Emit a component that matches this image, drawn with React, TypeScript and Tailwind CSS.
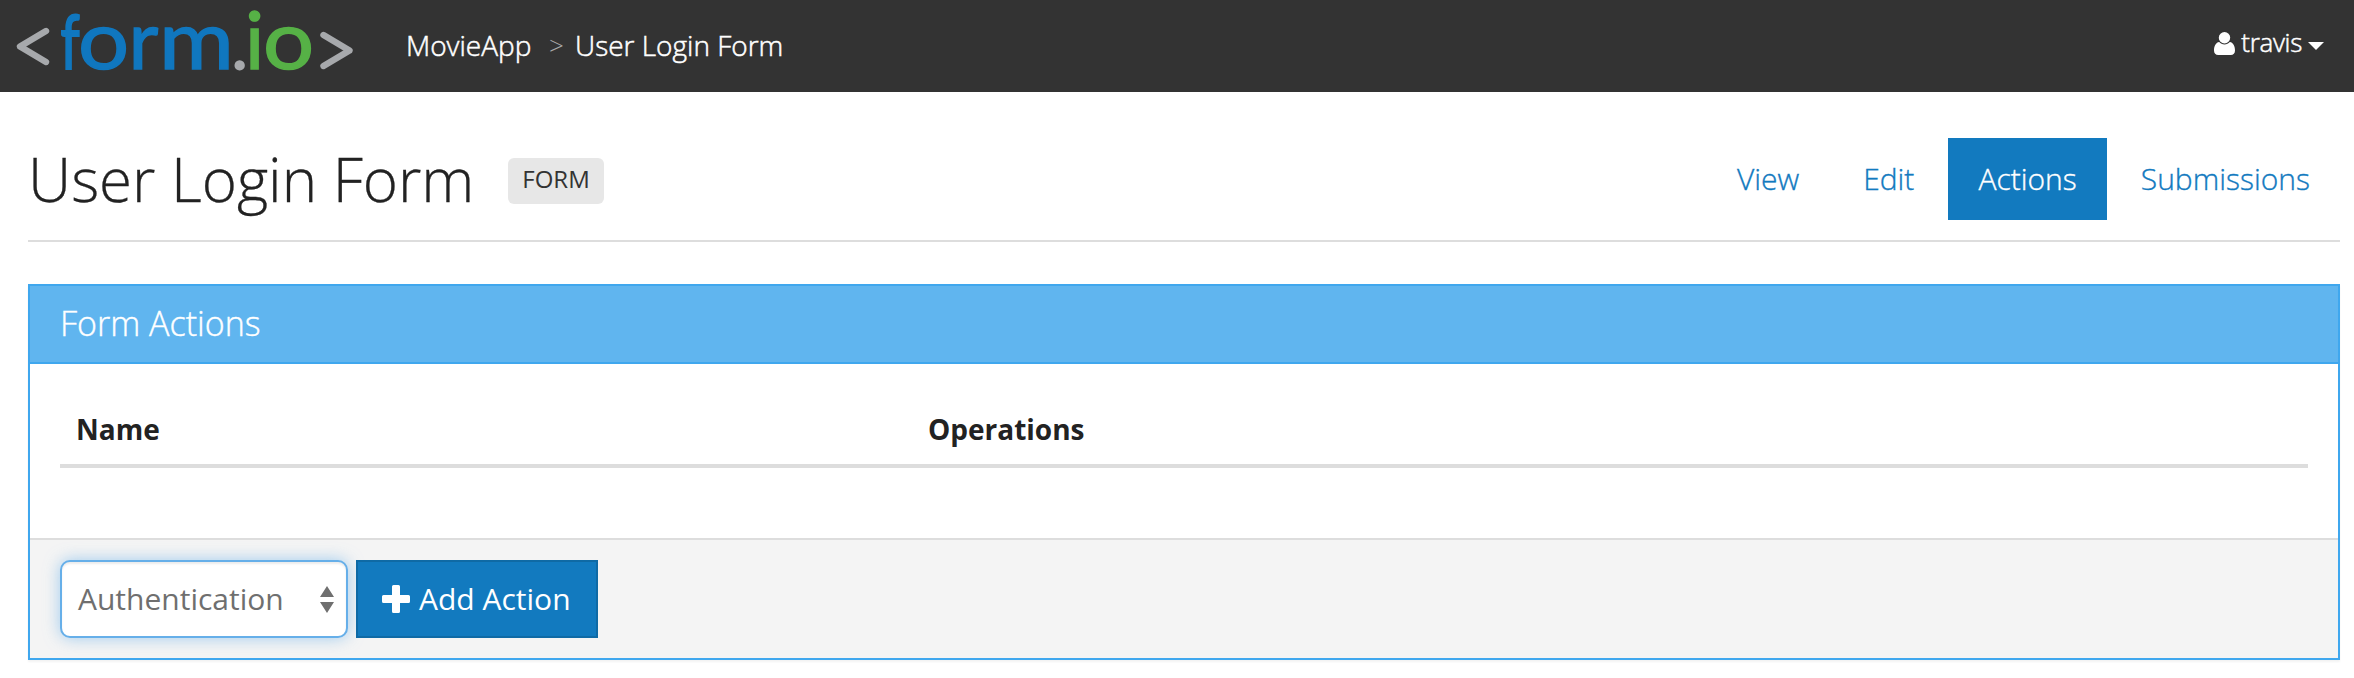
import React from "react";

function Logo() {
  return (
    <svg width="360" height="92" viewBox="0 0 360 92" role="img" aria-label="form.io" className="shrink-0 overflow-visible">
      <g fill="none" stroke="#a7a9ac" strokeWidth="6.4" strokeLinecap="round" strokeLinejoin="round">
        <polyline points="46,31 20,46.5 46,62" />
        <polyline points="323.5,35 349.5,50.5 323.5,66" />
      </g>
      <g fontFamily="Lato, sans-serif" fontSize="82" strokeWidth="1.4">
        <g fill="#1077bf" stroke="#1077bf">
          <text transform="translate(60.5 68.5) scale(0.72 1)" fontSize="76" strokeWidth="2.2">f</text>
          <text transform="translate(78.1 69) scale(1.1 1)">o</text>
          <text transform="translate(128.5 69)">r</text>
          <text transform="translate(159 69) scale(1.11 1)">m</text>
        </g>
        <text transform="translate(230 69.500)" fill="#a7a9ac">.</text>
        <g fill="#56b146" stroke="#56b146">
          <text transform="translate(245.1 69)" fontSize="80">i</text>
          <text transform="translate(263 69) scale(1.1 1)">o</text>
        </g>
      </g>
    </svg>
  );
}

function Header() {
  return (
    <header className="flex h-[92px] items-center bg-[#333333] text-white">
      <Logo />
      <nav className="mb-0.5 flex items-center pl-[46px] text-[28px] leading-10 font-light [-webkit-text-stroke:0.5px]">
        <a className="w-[143px]">MovieApp</a>
        <span className="w-[26px] text-[26px] text-[#aaaaaa] [-webkit-text-stroke:0]">&gt;</span>
        <a>User Login Form</a>
      </nav>
      <div className="mr-[30px] mb-2 ml-auto flex items-center text-[26px] leading-10 font-light tracking-[-0.3px] [-webkit-text-stroke:0.5px]">
        <svg width="21" height="23" viewBox="0 0 21 23" fill="currentColor" className="mt-0.5 mr-1.5">
          <circle cx="10.5" cy="5.8" r="5.7" />
          <path d="M5.2 10C1.5 10.6 0 14.500 0 18.500C0 21.300 1.700 23 4.200 23H16.800C19.300 23 21 21.300 21 18.500C21 14.500 19.500 10.600 15.800 10C14.400 11.500 12.600 12.400 10.500 12.400S6.600 11.500 5.200 10Z" />
        </svg>
        <span>travis</span>
        <svg width="16" height="8" viewBox="0 0 16 8" fill="currentColor" className="mt-2 ml-1.5">
          <path d="M0 0H16L8 8Z" />
        </svg>
      </div>
    </header>
  );
}

const tabs = ["View", "Edit", "Actions", "Submissions"];

function Tabs() {
  return (
    <nav className="flex gap-1 text-[30px] leading-[82px] font-light [-webkit-text-stroke:0.35px]">
      {tabs.map((tab) => (
        <a
          key={tab}
          className={tab === "Actions" ? "bg-[#127abf] px-[30px] text-white" : "px-[30px] text-[#127abf]"}
        >
          {tab}
        </a>
      ))}
    </nav>
  );
}

export default function App() {
  return (
    <div className="h-[678px] overflow-hidden bg-white font-['Open_Sans',sans-serif] text-[#222222]">
      <Header />
      <main className="pr-[14px] pl-7">
        <div className="flex h-[150px] items-start justify-between border-b-2 border-[#dddddd] pt-[46px]">
          <div className="flex">
            <h1 className="w-[480px] text-[60px] leading-[82px] font-light whitespace-nowrap [-webkit-text-stroke:0.3px]">
              User Login Form
            </h1>
            <span className="mt-5 flex h-[46px] w-24 justify-center rounded-md bg-[#e7e7e7] text-[24px] leading-[41px] text-[#333333]">
              FORM
            </span>
          </div>
          <Tabs />
        </div>

        <section className="mt-[42px] flex h-[376px] flex-col border-2 border-[#3fa7ee] shadow-[0_2px_2px_rgba(0,0,0,0.05)]">
          <h2 className="h-[78px] border-b-2 border-[#3fa7ee] bg-[#60b5ef] px-[30px] text-[34px] leading-[74px] font-light text-white [-webkit-text-stroke:0.4px]">
            Form Actions
          </h2>
          <div className="flex-1 px-[30px] pt-[30px]">
            <div className="flex h-[74px] border-b-4 border-[#dddddd] text-[28px] leading-[71px] font-bold">
              <div className="w-[852px] pl-4">Name</div>
              <div className="pl-4">Operations</div>
            </div>
          </div>
          <div className="flex h-[120px] items-center gap-2 border-t-2 border-[#dddddd] bg-[#f4f4f4] px-[30px]">
            <div className="flex h-[78px] w-[288px] items-center justify-between rounded-[10px] border-2 border-[#66afe9] bg-white pr-3 pl-4 text-[30px] text-[#6f6f6f] shadow-[inset_0_2px_2px_rgba(0,0,0,0.075),0_0_16px_rgba(102,175,233,0.6)]">
              <span className="mb-0.5">Authentication</span>
              <svg width="14" height="27" viewBox="0 0 14 27" fill="currentColor">
                <path d="M0 11L7 0L14 11ZM0 16H14L7 27Z" />
              </svg>
            </div>
            <button className="flex h-[78px] w-[242px] items-center border-2 border-[#0f6aa5] bg-[#127abf] pl-6 text-[30px] whitespace-nowrap text-white">
              <svg width="28" height="28" viewBox="0 0 28 28" fill="currentColor" className="mr-[9px] shrink-0">
                <path d="M11.500 0H16.500Q18 0 18 1.500V10H26.500Q28 10 28 11.500V16.500Q28 18 26.500 18H18V26.500Q18 28 16.500 28H11.500Q10 28 10 26.500V18H1.500Q0 18 0 16.500V11.500Q0 10 1.500 10H10V1.500Q10 0 11.500 0Z" />
              </svg>
              <span className="mb-0.5">Add Action</span>
            </button>
          </div>
        </section>
      </main>
    </div>
  );
}
